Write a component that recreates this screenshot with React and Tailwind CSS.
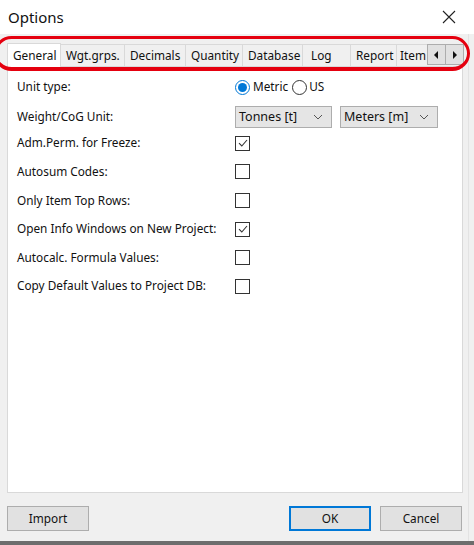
import React from "react";

const font = { fontFamily: '"Noto Sans", "Open Sans", sans-serif' };

function Check({ checked }) {
  return (
    <div className="w-[15px] h-[15px] border border-[#333] bg-white flex items-center justify-center">
      {checked && (
        <svg width="12" height="12" viewBox="0 0 12 12">
          <path d="M2 6.2 L4.8 9 L10 3" fill="none" stroke="#333" strokeWidth="1.1" />
        </svg>
      )}
    </div>
  );
}

function Radio({ checked }) {
  return (
    <div
      className={`w-[15px] h-[15px] rounded-full border flex items-center justify-center bg-white ${
        checked ? "border-[#0078d7]" : "border-[#333]"
      }`}
    >
      {checked && <div className="w-[9px] h-[9px] rounded-full bg-[#0078d7]" />}
    </div>
  );
}

function Select({ label, w }) {
  return (
    <div
      className={`${w} h-[22px] bg-[#e5e5e5] border border-[#adadad] flex items-center justify-between pl-[3px] pr-[8px]`}
    >
      <span className="text-[12.5px]">{label}</span>
      <svg width="10" height="6" viewBox="0 0 10 6">
        <path d="M1 1 L5 5 L9 1" fill="none" stroke="#555" strokeWidth="1" />
      </svg>
    </div>
  );
}

const tabs = [
  ["General", "w-[54px] pl-[5px]"],
  ["Wgt.grps.", "w-[64px] pl-[5px]"],
  ["Decimals", "w-[61px] pl-[5px]"],
  ["Quantity", "w-[57px] pl-[5px]"],
  ["Database", "w-[60px] pl-[5px]"],
  ["Log", "w-[48px] pl-[8px]"],
  ["Report", "w-[46px] pl-[5px]"],
];

const rows = [
  ["Adm.Perm. for Freeze:", true],
  ["Autosum Codes:", false],
  ["Only Item Top Rows:", false],
  ["Open Info Windows on New Project:", true],
  ["Autocalc. Formula Values:", false],
  ["Copy Default Values to Project DB:", false],
];

export default function App() {
  return (
    <div className="w-[474px] h-[545px] bg-[#f0f0f0] flex flex-col text-[11.8px] text-[#111] overflow-hidden" style={font}>
      {/* title bar */}
      <div className="h-[34px] bg-white flex items-center justify-between pl-[8px] pr-[18px] shrink-0">
        <span className="text-[15px] text-[#111]">Options</span>
        <svg width="14" height="14" viewBox="0 0 14 14">
          <path d="M1 1 L13 13 M13 1 L1 13" stroke="#222" strokeWidth="1.1" />
        </svg>
      </div>
      <div className="flex flex-1 min-h-0">
        <div className="flex-1 flex flex-col pl-[7px] pr-[4px] relative">
          {/* tab strip */}
          <div className="h-[32px] flex items-end shrink-0 pt-[10px]">
            <div className="flex items-end h-[22px]">
              {tabs.map(([t, w], i) => (
                <div
                  key={t}
                  className={`${w} flex items-center justify-start border-t border-r border-[#d9d9d9] ${
                    i === 0 ? "h-[24px] bg-white border-l relative z-10 -mb-px" : "h-[22px] bg-[#f0f0f0]"
                  }`}
                >
                  {t}
                </div>
              ))}
              <div className="w-[30px] h-[22px] overflow-hidden border-t border-[#d9d9d9] flex items-center pl-[3px]">
                <span className="whitespace-nowrap">Item</span>
              </div>
              <div className="flex h-[22px]">
                <div className="w-[19px] h-[21px] bg-[#e1e1e1] border border-[#adadad] flex items-center justify-center">
                  <svg width="5" height="8" viewBox="0 0 5 8"><path d="M4 0 L0 4 L4 8 Z" fill="#111" /></svg>
                </div>
                <div className="w-[18px] h-[21px] bg-[#e1e1e1] border border-l-0 border-[#adadad] flex items-center justify-center">
                  <svg width="5" height="8" viewBox="0 0 5 8"><path d="M1 0 L5 4 L1 8 Z" fill="#111" /></svg>
                </div>
              </div>
            </div>
          </div>
          {/* red annotation outline */}
          <div className="absolute left-[-6px] top-[2px] w-[476px] h-[35px] border-[3px] border-b-4 border-[#e5000f] rounded-[18px] pointer-events-none z-20" />
          {/* panel */}
          <div className="w-[456px] h-[427px] bg-white border border-[#d9d9d9] pl-[9px] pt-[10px]">
            <div className="flex items-center h-[20px]">
              <span className="w-[218px]">Unit type:</span>
              <Radio checked />
              <span className="ml-[3px]">Metric</span>
              <div className="ml-[4px]"><Radio /></div>
              <span className="ml-[2px]">US</span>
            </div>
            <div className="flex items-center h-[22px] mt-[9px]">
              <span className="w-[218px]">Weight/CoG Unit:</span>
              <Select label="Tonnes [t]" w="w-[97px]" />
              <div className="ml-[8px]">
                <Select label="Meters [m]" w="w-[98px]" />
              </div>
            </div>
            <div className="flex flex-col mt-[1px]">
              {rows.map(([l, c]) => (
                <div key={l} className="flex items-center h-[28.6px]">
                  <span className="w-[218px]">{l}</span>
                  <Check checked={c} />
                </div>
              ))}
            </div>
          </div>
          {/* buttons */}
          <div className="flex items-center justify-between mt-[13px] pr-[2px]">
            <button className="w-[82px] h-[25px] bg-[#e1e1e1] border border-[#adadad]">Import</button>
            <div className="flex gap-[9px]">
              <button className="w-[82px] h-[25px] bg-[#e1e1e1] border-2 border-[#0078d7]">OK</button>
              <button className="w-[82px] h-[25px] bg-[#e1e1e1] border border-[#adadad]">Cancel</button>
            </div>
          </div>
        </div>
        <div className="w-[7px] bg-[#f0f0f0] border-l border-[#e3e3e3]" />
      </div>
      <div className="h-[4px] bg-[#6d6d6d] shrink-0" />
    </div>
  );
}
